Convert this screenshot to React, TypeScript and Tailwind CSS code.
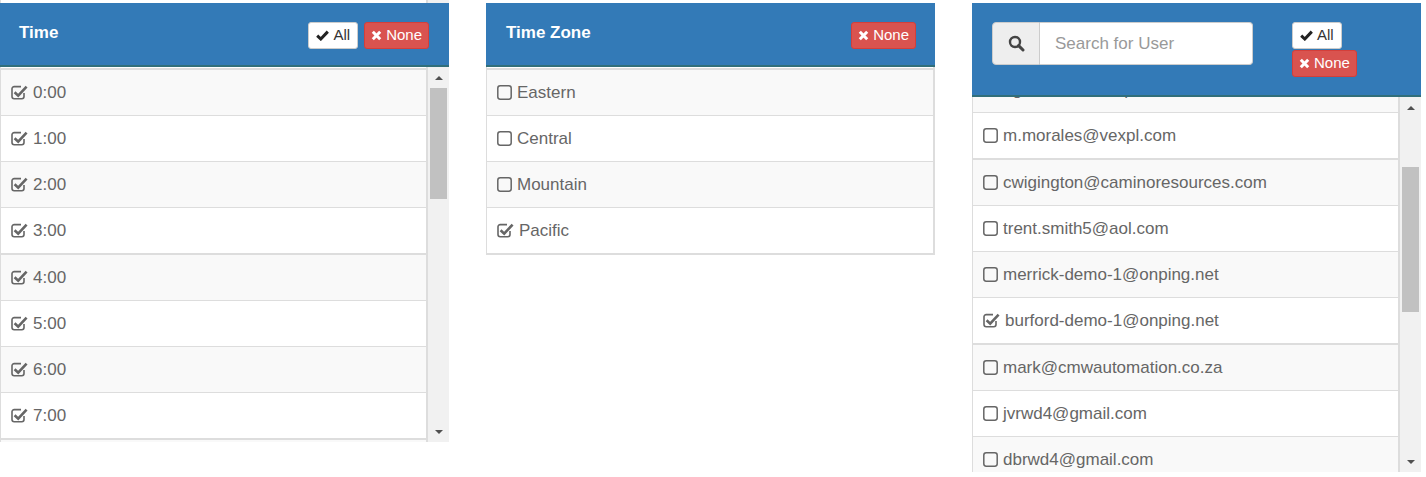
import React from "react";

type Item = { label: string; checked: boolean };

const CheckedBox = () => (
  <svg width="17" height="15" viewBox="0 0 17 15" className="shrink-0">
    <path
      d="M13 8 V11.5 a2.2 2.2 0 0 1 -2.2 2.2 H3.2 a2.2 2.2 0 0 1 -2.2 -2.2 V3.8 a2.2 2.2 0 0 1 2.2 -2.2 H10"
      fill="none"
      stroke="#666"
      strokeWidth="1.6"
    />
    <path d="M3.6 7.2 L7.2 10.6 L15.6 1.6" fill="none" stroke="#666" strokeWidth="2.6" />
  </svg>
);

const EmptyBox = () => (
  <svg width="15" height="15" viewBox="0 0 15 15" className="shrink-0">
    <rect x="0.8" y="0.8" width="13.4" height="13.4" rx="2.4" fill="none" stroke="#666" strokeWidth="1.5" />
  </svg>
);

const CheckIcon = () => (
  <svg width="13" height="11" viewBox="0 0 13 11">
    <path d="M1.2 5.6 L4.8 9 L11.8 1.6" fill="none" stroke="#222" strokeWidth="3" />
  </svg>
);

const TimesIcon = () => (
  <svg width="11" height="11" viewBox="0 0 11 11">
    <path d="M1.8 1.8 L9.2 9.2 M9.2 1.8 L1.8 9.2" fill="none" stroke="#fff" strokeWidth="3" />
  </svg>
);

const SearchIcon = () => (
  <svg width="17" height="17" viewBox="0 0 17 17">
    <circle cx="7" cy="7" r="5" fill="none" stroke="#444" strokeWidth="2.4" />
    <path d="M10.6 10.6 L15 15" stroke="#444" strokeWidth="3" strokeLinecap="round" />
  </svg>
);

const AllButton = () => (
  <button className="flex h-[27px] items-center gap-[4px] rounded-[3px] border border-[#ccc] bg-white px-[7px] text-[15px] text-[#333]">
    <CheckIcon />
    All
  </button>
);

const NoneButton = () => (
  <button className="flex h-[27px] items-center gap-[4px] rounded-[3px] border border-[#d43f3a] bg-[#d9534f] px-[6px] text-[15px] text-white">
    <TimesIcon />
    None
  </button>
);

function Row({ item, idx, first }: { item: Item; idx: number; first: boolean }) {
  return (
    <div
      className={
        (first ? "border-t-2 " : "border-t ") +
        (idx % 2 === 0 ? "bg-[#f9f9f9] " : "bg-white ") +
        "flex items-center border-[#ddd] pl-[10px]"
      }
    >
      <div className="flex h-[45px] items-center gap-[5px]">
        {item.checked ? <CheckedBox /> : <EmptyBox />}
        <span className="text-[17px] text-[#666]">{item.label}</span>
      </div>
    </div>
  );
}

// groups of 4 rows, like tbody blocks
function Rows({ items, start = 0 }: { items: Item[]; start?: number }) {
  return (
    <>
      {items.map((it, i) => {
        const n = i + start;
        return <Row key={it.label} item={it} idx={n % 4} first={n % 4 === 0} />;
      })}
    </>
  );
}

function Scrollbar({ thumbTop, thumbHeight }: { thumbTop: number; thumbHeight: number }) {
  return (
    <div className="flex w-[21px] shrink-0 flex-col bg-[#f1f1f1]">
      <div className="flex h-[21px] items-center justify-center">
        <div className="h-0 w-0 border-x-[4px] border-b-[4px] border-x-transparent border-b-[#505050]" />
      </div>
      <div className="mx-[2px] bg-[#c1c1c1]" style={{ marginTop: thumbTop, height: thumbHeight }} />
      <div className="flex-1" />
      <div className="flex h-[21px] items-center justify-center">
        <div className="h-0 w-0 border-x-[4px] border-t-[4px] border-x-transparent border-t-[#505050]" />
      </div>
    </div>
  );
}

const times: Item[] = ["0:00", "1:00", "2:00", "3:00", "4:00", "5:00", "6:00", "7:00", "8:00"].map((t) => ({
  label: t,
  checked: true,
}));

const zones: Item[] = [
  { label: "Eastern", checked: false },
  { label: "Central", checked: false },
  { label: "Mountain", checked: false },
  { label: "Pacific", checked: true },
];

const users: Item[] = [
  { label: "r.gonzales@vexpl.com", checked: false },
  { label: "m.morales@vexpl.com", checked: false },
  { label: "cwigington@caminoresources.com", checked: false },
  { label: "trent.smith5@aol.com", checked: false },
  { label: "merrick-demo-1@onping.net", checked: false },
  { label: "burford-demo-1@onping.net", checked: true },
  { label: "mark@cmwautomation.co.za", checked: false },
  { label: "jvrwd4@gmail.com", checked: false },
  { label: "dbrwd4@gmail.com", checked: false },
  { label: "kyle@onping.net", checked: false },
];

export default function App() {
  return (
    <div className="flex h-[477px] items-start gap-[37px] overflow-hidden bg-white font-['Liberation_Sans',Arial,sans-serif]">
      {/* Time */}
      <div className="flex w-[449px] shrink-0 flex-col">
        <div className="flex h-[3px]">
          <div className="flex-1 border-l border-r-2 border-[#ddd] bg-white" />
          <div className="w-[21px] bg-[#f1f1f1]" />
        </div>
        <div className="flex h-[64px] items-start justify-between border-b-2 border-[#316f7a] bg-[#337ab7] pl-[19px] pr-[20px] pt-[19px]">
          <h3 className="mt-[1px] text-[17px] font-bold leading-[20px] text-white">Time</h3>
          <div className="flex gap-[6px]">
            <AllButton />
            <NoneButton />
          </div>
        </div>
        <div className="flex h-[375px]">
          <div className="flex-1 overflow-hidden border-l border-r-2 border-[#ddd] pt-px">
            <Rows items={times} />
          </div>
          <Scrollbar thumbTop={0} thumbHeight={111} />
        </div>
      </div>

      {/* Time Zone */}
      <div className="flex w-[449px] shrink-0 flex-col">
        <div className="h-[3px]" />
        <div className="flex h-[64px] items-start justify-between border-b-2 border-[#316f7a] bg-[#337ab7] pl-[20px] pr-[19px] pt-[19px]">
          <h3 className="mt-[1px] text-[17px] font-bold leading-[20px] text-white">Time Zone</h3>
          <NoneButton />
        </div>
        <div className="border-b-2 border-l border-r-2 border-[#ddd] pt-px">
          <Rows items={zones} />
        </div>
      </div>

      {/* Users */}
      <div className="flex w-[449px] shrink-0 flex-col">
        <div className="h-[3px]" />
        <div className="flex h-[94px] items-start border-b-2 border-[#316f7a] bg-[#337ab7] pl-[20px] pt-[19px]">
          <div className="flex h-[43px] w-[261px]">
            <div className="flex w-[48px] items-center justify-center rounded-l-[4px] border border-[#ccc] bg-[#eee]">
              <SearchIcon />
            </div>
            <input
              placeholder="Search for User"
              className="min-w-0 flex-1 rounded-r-[4px] border border-l-0 border-[#ccc] bg-white pl-[15px] text-[17px] text-[#555] placeholder:text-[#999] outline-none"
            />
          </div>
          <div className="ml-[39px] flex flex-col items-start gap-px">
            <AllButton />
            <NoneButton />
          </div>
        </div>
        <div className="flex h-[375px]">
          <div className="flex-1 overflow-hidden border-l border-r-2 border-[#ddd]">
            <div className="-mt-[31px]">
              <Rows items={users} start={2} />
            </div>
          </div>
          <Scrollbar thumbTop={49} thumbHeight={145} />
        </div>
      </div>
    </div>
  );
}
